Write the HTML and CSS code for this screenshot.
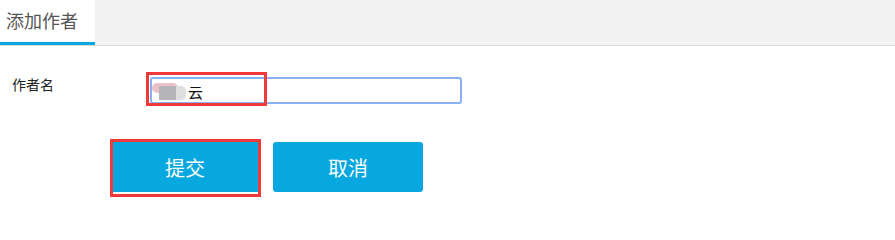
FILE: index.html
```html
<!DOCTYPE html>
<html lang="zh">
<head>
<meta charset="utf-8">
<title>添加作者</title>
<link rel="stylesheet" href="styles.css">
</head>
<body>
<div class="tabbar">
  <div class="tab active">添加作者</div>
</div>
<div class="form">
  <div class="row">
    <div class="label">作者名</div>
    <div class="input-wrap">
      <div class="input"><span class="redact"><span class="r-pink"></span><span class="r-gray"></span><span class="r-light"></span></span><span class="val">云</span></div>
      <div class="mark mark-input"></div>
    </div>
  </div>
  <div class="actions">
    <div class="btn-wrap">
      <button class="btn">提交</button>
      <div class="mark mark-btn"></div>
    </div>
    <button class="btn">取消</button>
  </div>
</div>
</body>
</html>
```
FILE: styles.css
```css
html, body {
  margin: 0;
  padding: 0;
  background: #fff;
  font-family: "Noto Sans CJK SC", "Noto Sans", sans-serif;
}
body {
  min-height: 200px;
}
.tabbar {
  display: flex;
  height: 45px;
  background: #f2f2f2;
  border-bottom: 1px solid #dcdcdc;
}
.tab {
  width: 95px;
  box-sizing: border-box;
  padding-left: 6px;
  font-size: 18px;
  line-height: 40px;
  color: #555;
}
.tab.active {
  background: #fff;
  border-bottom: 3px solid #0aa6df;
}
.form {
  padding-top: 31px;
  padding-bottom: 8px;
}
.row {
  display: flex;
  align-items: flex-start;
}
.label {
  width: 138px;
  padding-left: 12px;
  font-size: 14px;
  line-height: 14px;
  color: #222;
}
.input-wrap {
  position: relative;
}
.input {
  width: 312px;
  height: 27px;
  box-sizing: border-box;
  border: 2px solid #88b0f5;
  border-radius: 3px;
  display: flex;
  align-items: center;
  padding-left: 0;
  font-size: 15px;
  color: #111;
}
.redact {
  position: relative;
  display: inline-block;
  width: 35px;
  height: 17px;
  margin-top: 2px;
}
.r-pink {
  position: absolute;
  left: 0;
  top: 0;
  width: 26px;
  height: 10px;
  background: #e9c3c9;
  border-radius: 5px;
}
.r-gray {
  position: absolute;
  left: 7px;
  top: 3px;
  width: 17px;
  height: 14px;
  background: #b5b5b8;
}
.r-light {
  position: absolute;
  left: 24px;
  top: 3px;
  width: 10px;
  height: 14px;
  background: #dedede;
  border-radius: 0 5px 5px 0;
}
.val {
  margin-top: 2px;
  margin-left: 1px;
}
.mark {
  position: absolute;
  box-sizing: border-box;
  border: 3px solid #f03a3a;
  pointer-events: none;
}
.mark-input {
  left: -4px;
  top: -5px;
  width: 121px;
  height: 34px;
}
.actions {
  display: flex;
  gap: 13px;
  padding-left: 110px;
  margin-top: 38px;
}
.btn-wrap {
  position: relative;
  display: flex;
}
.btn {
  width: 150px;
  height: 50px;
  border: none;
  border-radius: 3px;
  background: #07a7e0;
  color: #fff;
  font-family: "Noto Sans CJK SC", "Noto Sans", sans-serif;
  font-size: 20px;
  padding: 0;
}
.mark-btn {
  left: 0;
  top: -3px;
  width: 151px;
  height: 58px;
}
```
